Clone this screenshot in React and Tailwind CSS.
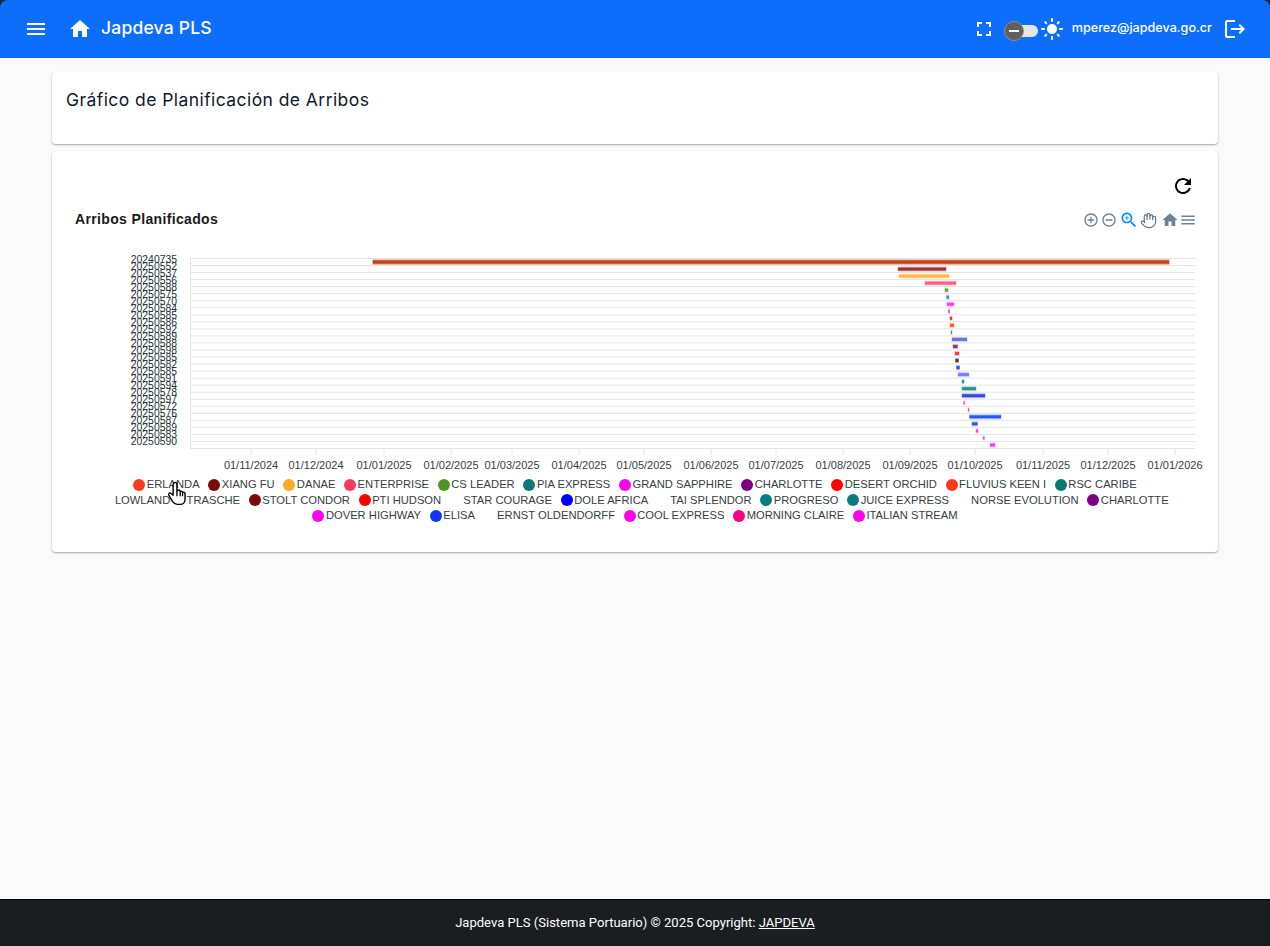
import React from "react";
import { Hand } from "lucide-react";

const P = {
  menu: "M3 18h18v-2H3v2zm0-5h18v-2H3v2zm0-7v2h18V6H3z",
  home: "M10 20v-6h4v6h5v-8h3L12 3 2 12h3v8z",
  full: "M7 14H5v5h5v-2H7v-3zm-2-4h2V7h3V5H5v5zm12 7h-3v2h5v-5h-2v3zM14 5v2h3v3h2V5h-5z",
  sun: "M12 7c-2.76 0-5 2.24-5 5s2.24 5 5 5 5-2.24 5-5-2.24-5-5-5zM2 13h2c.55 0 1-.45 1-1s-.45-1-1-1H2c-.55 0-1 .45-1 1s.45 1 1 1zm18 0h2c.55 0 1-.45 1-1s-.45-1-1-1h-2c-.55 0-1 .45-1 1s.45 1 1 1zM11 2v2c0 .55.45 1 1 1s1-.45 1-1V2c0-.55-.45-1-1-1s-1 .45-1 1zm0 18v2c0 .55.45 1 1 1s1-.45 1-1v-2c0-.55-.45-1-1-1s-1 .45-1 1zM5.99 4.58c-.39-.39-1.03-.39-1.41 0-.39.39-.39 1.03 0 1.41l1.06 1.06c.39.39 1.03.39 1.41 0s.39-1.03 0-1.41L5.99 4.58zm12.37 12.37c-.39-.39-1.03-.39-1.41 0-.39.39-.39 1.03 0 1.41l1.06 1.06c.39.39 1.03.39 1.41 0 .39-.39.39-1.03 0-1.41l-1.06-1.06zm1.06-10.96c.39-.39.39-1.03 0-1.41-.39-.39-1.03-.39-1.41 0l-1.06 1.06c-.39.39-.39 1.03 0 1.41s1.03.39 1.41 0l1.06-1.06zM7.05 18.36c.39-.39.39-1.03 0-1.41-.39-.39-1.03-.39-1.41 0l-1.06 1.06c-.39.39-.39 1.03 0 1.41s1.03.39 1.41 0l1.06-1.06z",
  logout: "M17 7l-1.41 1.41L18.17 11H8v2h10.17l-2.58 2.58L17 17l5-5zM4 5h8V3H4c-1.1 0-2 .9-2 2v14c0 1.1.9 2 2 2h8v-2H4V5z",
  refresh: "M17.65 6.35C16.2 4.9 14.21 4 12 4c-4.42 0-7.99 3.58-7.99 8s3.57 8 7.99 8c3.73 0 6.84-2.55 7.73-6h-2.08c-.82 2.33-3.04 4-5.65 4-3.31 0-6-2.69-6-6s2.69-6 6-6c1.66 0 3.14.69 4.22 1.78L13 11h7V4l-2.35 2.35z",
  plus: "M13 7h-2v4H7v2h4v4h2v-4h4v-2h-4V7zm-1-5C6.48 2 2 6.48 2 12s4.48 10 10 10 10-4.48 10-10S17.52 2 12 2zm0 18c-4.41 0-8-3.59-8-8s3.59-8 8-8 8 3.59 8 8-3.59 8-8 8z",
  minus: "M7 11v2h10v-2H7zm5-9C6.48 2 2 6.48 2 12s4.48 10 10 10 10-4.48 10-10S17.52 2 12 2zm0 18c-4.41 0-8-3.59-8-8s3.59-8 8-8 8 3.59 8 8-3.59 8-8 8z",
  zoom: "M15.5 14h-.79l-.28-.27C15.41 12.59 16 11.11 16 9.5 16 5.91 13.09 3 9.5 3S3 5.91 3 9.5 5.91 16 9.5 16c1.61 0 3.09-.59 4.23-1.57l.27.28v.79l5 4.99L20.49 19l-4.99-5zm-6 0C7.01 14 5 11.99 5 9.5S7.01 5 9.5 5 14 7.01 14 9.5 11.99 14 9.5 14z M12 10h-2v2H9v-2H7V9h2V7h1v2h2v1z",
};

const Ic = ({ d, size = 24, className = "" }) => (
  <svg viewBox="0 0 24 24" width={size} height={size} fill="currentColor" className={"shrink-0 " + className}>
    <path d={d} />
  </svg>
);

const ids = ["20240735","20250552","20250537","20250556","20250588","20250575","20250570","20250584","20250585","20250586","20250592","20250589","20250588","20250598","20250585","20250582","20250585","20250591","20250594","20250578","20250597","20250572","20250576","20250587","20250589","20250583","20250590"];

const bars = [
  [373,1169,"#c0360c"],[898,946,"#8a1a1a"],[899,949,"#ffae28"],[925,956,"#f5506e"],[945,948,"#4f961e"],
  [946.5,949,"#0b8a95"],[947,954,"#ff22ee"],[948.5,949.5,"#a020a0"],[950,952,"#ff1010"],[950,954,"#ff4a10"],
  [951,952,"#0b8a95"],[952,967,"#5560f0"],[953,957.5,"#8a2030"],[955,959,"#ff2030"],[955.5,958.5,"#222222"],
  [956.5,959.5,"#1030ff"],[958,969,"#6a70f0"],[962,964,"#0b8080"],[962,976,"#0b8a80"],[962,985,"#2030e0"],
  [963.5,965,"#d060d0"],[968,969,"#ff22ee"],[969.5,1001,"#1040ff"],[972,977.5,"#2040e0"],[976,978,"#ff22ee"],
  [983,984.5,"#ff40c0"],[990,995,"#ff22ee"],
];

const ticks = [[251,"01/11/2024"],[316,"01/12/2024"],[384,"01/01/2025"],[451,"01/02/2025"],[512,"01/03/2025"],[579,"01/04/2025"],[644,"01/05/2025"],[711,"01/06/2025"],[776,"01/07/2025"],[843,"01/08/2025"],[910,"01/09/2025"],[975,"01/10/2025"],[1043,"01/11/2025"],[1108,"01/12/2025"],[1175,"01/01/2026"]];

const legend = [
  ["ERLANDA","#fb3a1e"],["XIANG FU","#7d0a0a"],["DANAE","#fbab25"],["ENTERPRISE","#f23b5f"],["CS LEADER","#4f961e"],["PIA EXPRESS","#0b7a75"],["GRAND SAPPHIRE","#ff00ee"],["CHARLOTTE","#800080"],["DESERT ORCHID","#ff0000"],["FLUVIUS KEEN I","#fb3a1e"],["RSC CARIBE","#0b7a75"],
  ["LOWLAND TRASCHE","#ffffff"],["STOLT CONDOR","#7d0a0a"],["PTI HUDSON","#ff0000"],["STAR COURAGE","#ffffff"],["DOLE AFRICA","#0000ff"],["TAI SPLENDOR","#ffffff"],["PROGRESO","#008080"],["JUICE EXPRESS","#0b7a80"],["NORSE EVOLUTION","#ffffff"],["CHARLOTTE","#800080"],
  ["DOVER HIGHWAY","#ff00ee"],["ELISA","#1433ff"],["ERNST OLDENDORFF","#ffffff"],["COOL EXPRESS","#ff00ee"],["MORNING CLAIRE","#ff0080"],["ITALIAN STREAM","#ff00ee"],
];

const ROW = 190 / 27;
const TOP = 258.5;

function Chart() {
  return (
    <svg viewBox="52 250 1166 226" width="1166" height="226" className="block" style={{ fontFamily: "'Liberation Sans', sans-serif" }}>
      {Array.from({ length: 28 }, (_, i) => (
        <line key={i} x1="190" x2="1195" y1={TOP + i * ROW} y2={TOP + i * ROW} stroke="#e4e4e4" strokeWidth="1" />
      ))}
      <line x1="190.5" x2="190.5" y1={TOP} y2="449" stroke="#e4e4e4" />
      {ticks.map(([x]) => (
        <line key={x} x1={x} x2={x} y1="449" y2="455" stroke="#e4e4e4" />
      ))}
      {ticks.map(([x, t]) => (
        <text key={x} x={x} y="469" textAnchor="middle" fontSize="11" fill="#373d3f">{t}</text>
      ))}
      {ids.map((t, i) => (
        <text key={i} x="177" y={262.7 + i * 7} textAnchor="end" fontSize="10.4" fill="#263238">{t}</text>
      ))}
      {bars.map(([a, b, c], i) => {
        const cy = TOP + (i + 0.5) * ROW;
        return (
          <g key={i}>
            <rect x={a - 0.5} y={cy - 2.5} width={b - a + 1} height="5" fill={c} opacity={i === 0 ? 0.6 : 0.3} />
            <rect x={a} y={cy - 1.5} width={Math.max(b - a, 0.5)} height="3" fill={c} opacity="0.85" />
          </g>
        );
      })}
    </svg>
  );
}

export default function App() {
  return (
    <div className="relative h-[946px] flex flex-col bg-[#fafafa] overflow-hidden" style={{ fontFamily: "Inter, sans-serif" }}>
      <div className="bg-[#23272b] shrink-0">
        <header className="h-[58px] bg-[#0d6efd] rounded-t-[8px] flex items-center justify-between text-white pl-[24px] pr-[23px]">
          <div className="flex items-center">
            <Ic d={P.menu} />
            <Ic d={P.home} className="ml-[20px]" />
            <span className="ml-[9px] text-[17.5px] font-medium leading-none -mt-[2px] tracking-[0.2px]">Japdeva PLS</span>
          </div>
          <div className="flex items-center">
            <Ic d={P.full} size={24} />
            <div className="relative ml-[8px] w-[34px] h-[12px] mt-[3px] flex justify-end">
              <div className="w-[24px] h-[12px] rounded-full bg-[#e6e6e6]" />
              <div className="absolute left-0 -top-[4px] w-[20px] h-[20px] rounded-full bg-[#5f5f5f] border border-[#9a8f70] flex items-center justify-center">
                <div className="w-[10px] h-[2px] bg-white" />
              </div>
            </div>
            <Ic d={P.sun} size={24} className="ml-[2px]" />
            <span className="ml-[8px] text-[12.6px] font-medium leading-none -mt-[1px]">mperez@japdeva.go.cr</span>
            <Ic d={P.logout} size={24} className="ml-[11px]" />
          </div>
        </header>
      </div>

      <main className="flex-1 px-[52px] pt-[14px]">
        <section className="h-[72px] bg-white rounded-[4px] shadow-[0_1px_2px_rgba(0,0,0,0.35)] pl-[14px] pt-[17px]">
          <h1 className="text-[17.5px] leading-[22px] font-normal text-[#111827] tracking-[0.43px]">Gráfico de Planificación de Arribos</h1>
        </section>
        <section className="relative mt-[7px] h-[401px] bg-white rounded-[4px] shadow-[0_1px_2px_rgba(0,0,0,0.35)]">
          <div className="flex justify-end pr-[23px] pt-[23px]">
            <Ic d={P.refresh} size={24} className="text-black" />
          </div>
          <div className="flex items-center justify-between pl-[23px] pr-[21px] mt-[12px] h-[20px]">
            <h2 className="text-[14px] font-bold text-[#1a1a1a] tracking-[0.35px] -mt-[2px]" style={{ fontFamily: "'Liberation Sans', sans-serif" }}>Arribos Planificados</h2>
            <div className="flex items-center text-[#6e8192]">
              <Ic d={P.plus} size={16} />
              <Ic d={P.minus} size={16} className="ml-[2px]" />
              <Ic d={P.zoom} size={20} className="ml-[2px] text-[#008ffb]" />
              <Hand size={17} strokeWidth={1.6} className="ml-[1px] text-[#5f6f7e]" />
              <Ic d={P.home} size={18} className="ml-[4px]" />
              <Ic d={P.menu} size={18} />
            </div>
          </div>
          <div className="mt-[20px]"><Chart /></div>
          <div className="mt-[1px] w-[1105px] mx-auto flex flex-wrap justify-center text-[11.2px] text-[#373d3f]" style={{ fontFamily: "'Liberation Sans', sans-serif" }}>
            {legend.map(([t, c], i) => (
              <div key={i} className="flex items-center h-[15.5px] mx-[4.35px] leading-none">
                <span className="w-[12px] h-[12px] rounded-full mr-[1.5px]" style={{ backgroundColor: c }} />
                <span className={t === "LOWLAND TRASCHE" ? "[word-spacing:13.5px]" : ""}>{t}</span>
              </div>
            ))}
          </div>
          <svg viewBox="0 0 24 24" width="26" height="28" className="absolute left-[113px] top-[328px]">
            <path d="M8 3c1-1 2.500-1 3 .5V10l1-.5c1-.5 2 0 2 1 1-.6 2.200 0 2.200 1 1-.5 2.300 0 2.300 1.200V18c0 2.500-2 4.500-4.500 4.500h-2.500c-2 0-3.500-1-4.500-2.500L3.500 14c-.8-1.500 1-2.800 2.200-1.500L7.500 14V4z" fill="#fff" stroke="#000" strokeWidth="1.3" strokeLinejoin="round" />
            <path d="M11 10v5M14 10.500V15M16.200 11.500V15" stroke="#000" strokeWidth="1.2" fill="none" />
          </svg>
        </section>
      </main>

      <footer className="h-[47px] shrink-0 bg-[#1a1e21] border-t border-black flex items-center justify-center text-white text-[13.05px]" style={{ fontFamily: "Roboto, sans-serif" }}>
        <span>Japdeva PLS (Sistema Portuario) © 2025 Copyright: <a className="underline" href="#">JAPDEVA</a></span>
      </footer>
    </div>
  );
}
